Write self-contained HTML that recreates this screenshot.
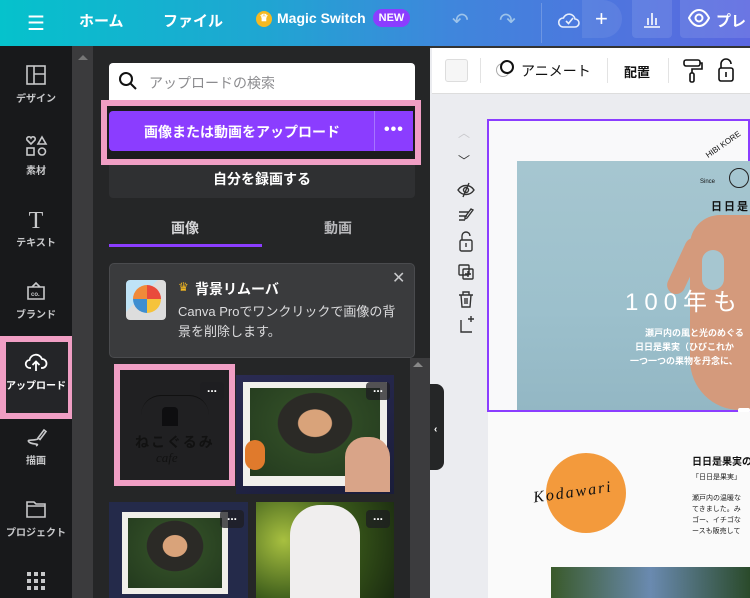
<!DOCTYPE html>
<html style="overflow:hidden;width:750px;height:598px"><head><meta charset="utf-8"><style>
*{margin:0;padding:0;box-sizing:border-box}
body{width:750px;height:598px;overflow:hidden;position:relative;font-family:"Liberation Sans","Noto Sans CJK JP",sans-serif;background:#ebecf0}
.a{position:absolute;white-space:nowrap}
.top{left:0;top:0;width:750px;height:46px;background:linear-gradient(90deg,#05c2cc 0%,#1fa6d2 35%,#3f86dc 60%,#5b67e0 100%);color:#fff;font-weight:bold;font-size:15px}
.side{left:0;top:46px;width:72px;height:552px;background:#18191b;overflow:hidden}
.si{position:absolute;left:0;width:72px;text-align:center;color:#c7c8ca;font-size:10px;font-weight:bold}
.si svg{display:block;margin:0 auto 4px}
.strip{left:72px;top:46px;width:21px;height:552px;background:#3b3b3d}
.panel{left:93px;top:46px;width:337px;height:552px;background:#252627}
.pink{border:6px solid #f09ec4}
.dots{position:absolute;width:24px;height:18px;background:rgba(30,30,34,.75);border-radius:4px;color:#fff;font-size:12px;text-align:center;line-height:12px;font-weight:bold}
</style></head><body>
<div class="a top">
 <div class="a" style="left:27px;top:11px;font-size:20px;font-weight:normal">☰</div>
 <div class="a" style="left:79px;top:10px">ホーム</div>
 <div class="a" style="left:163px;top:10px">ファイル</div>
 <div class="a" style="left:256px;top:11px;width:16px;height:16px;border-radius:8px;background:#f5b921;font-size:10px;text-align:center;line-height:16px;color:#fff">♛</div>
 <div class="a" style="left:277px;top:10px;font-size:14px">Magic Switch</div>
 <div class="a" style="left:373px;top:9px;width:37px;height:18px;border-radius:9px;background:#8b3dff;font-size:11px;text-align:center;line-height:18px">NEW</div>
 <div class="a" style="left:452px;top:8px;font-size:20px;color:#9cc3ea;font-weight:normal">↶</div>
 <div class="a" style="left:499px;top:8px;font-size:20px;color:#9cc3ea;font-weight:normal">↷</div>
 <div class="a" style="left:541px;top:3px;width:1px;height:40px;background:rgba(255,255,255,.2)"></div>
 <svg class="a" style="left:557px;top:8px" width="24" height="24" viewBox="0 0 24 24" fill="none" stroke="#e6eefc" stroke-width="1.6"><path d="M6 19h12a4 4 0 0 0 0-8 6 6 0 0 0-11.5-1A4.5 4.5 0 0 0 6 19z"/><path d="M9 13l2.5 2.5L16 10"/></svg>
 <div class="a" style="left:582px;top:0;width:40px;height:38px;background:rgba(255,255,255,.08);border-radius:0 20px 20px 0"></div>
 <div class="a" style="left:595px;top:6px;font-size:22px;font-weight:normal">+</div>
 <div class="a" style="left:632px;top:0;width:40px;height:38px;background:rgba(255,255,255,.1);border-radius:0 0 4px 4px"></div>
 <svg class="a" style="left:641px;top:8px" width="22" height="22" viewBox="0 0 22 22" fill="none" stroke="#fff" stroke-width="1.6"><path d="M3 19h16M7 17V10M11 17V5M15 17V10"/></svg>
 <div class="a" style="left:680px;top:0;width:80px;height:38px;background:rgba(255,255,255,.1);border-radius:0 0 4px 4px"></div>
 <svg class="a" style="left:688px;top:9px" width="22" height="18" viewBox="0 0 22 18" fill="none" stroke="#fff" stroke-width="2"><path d="M1 9C4 3 8 1 11 1s7 2 10 8c-3 6-7 8-10 8S4 15 1 9z"/><circle cx="11" cy="9" r="3.5"/></svg>
 <div class="a" style="left:716px;top:10px">プレ</div>
</div>
<div class="a" style="left:0;top:46px;width:750px;height:2px;background:#333"></div>

<div class="a side">
 <div class="si" style="top:18px"><svg width="22" height="22" viewBox="0 0 22 22" fill="none" stroke="#c7c8ca" stroke-width="1.6"><rect x="2" y="2" width="18" height="18"/><path d="M9 2v18M9 10h11"/></svg>デザイン</div>
 <div class="si" style="top:88px"><svg width="24" height="24" viewBox="0 0 24 24" fill="none" stroke="#c7c8ca" stroke-width="1.6"><path d="M7 10L3 6a2 2 0 0 1 4-2 2 2 0 0 1 4 2z"/><path d="M18 3l4 7h-8z"/><rect x="3" y="14" width="7" height="7"/><circle cx="18" cy="17.5" r="3.5"/></svg>素材</div>
 <div class="si" style="top:162px"><div style="font-family:'Liberation Serif',serif;font-size:24px;font-weight:normal;height:26px;color:#c7c8ca">T</div>テキスト</div>
 <div class="si" style="top:232px"><svg width="24" height="24" viewBox="0 0 24 24" fill="none" stroke="#c7c8ca" stroke-width="1.6"><path d="M4 9h16v12H4zM8 9l4-4 4 4"/><text x="7" y="18" font-size="6" fill="#c7c8ca" stroke="none">co.</text></svg>ブランド</div>
 <div class="a pink" style="left:0;top:290px;width:74px;height:83px;background:#242528"></div>
 <div class="si" style="top:305px;color:#fff"><svg width="24" height="22" viewBox="0 0 24 22" fill="none" stroke="#fff" stroke-width="1.8"><path d="M7 17H6a4 4 0 0 1-.5-8A6.5 6.5 0 0 1 18 8a4.5 4.5 0 0 1 0 9h-1"/><path d="M12 20v-9M8.5 14L12 10.5 15.5 14"/></svg>アップロード</div>
 <div class="si" style="top:380px"><svg width="24" height="22" viewBox="0 0 24 22" fill="none" stroke="#c7c8ca" stroke-width="1.6"><path d="M14 12l6-8 2 1.5-6 8zM14 13c-5 2-12 0-9 3s12 1 7 4"/></svg>描画</div>
 <div class="si" style="top:452px"><svg width="22" height="22" viewBox="0 0 22 22" fill="none" stroke="#c7c8ca" stroke-width="1.6"><path d="M2 4h7l2 2h9v13H2z"/><path d="M2 8h18"/></svg>プロジェクト</div>
 <div class="si" style="top:524px"><svg width="22" height="22" viewBox="0 0 22 22" fill="#c7c8ca"><rect x="2" y="2" width="4" height="4"/><rect x="9" y="2" width="4" height="4"/><rect x="16" y="2" width="4" height="4"/><rect x="2" y="9" width="4" height="4"/><rect x="9" y="9" width="4" height="4"/><rect x="16" y="9" width="4" height="4"/><rect x="2" y="16" width="4" height="4"/><rect x="9" y="16" width="4" height="4"/><rect x="16" y="16" width="4" height="4"/></svg>アプリ</div>
</div>
<div class="a strip"></div>
<div class="a" style="left:78px;top:55px;width:0;height:0;border-left:5px solid transparent;border-right:5px solid transparent;border-bottom:5px solid #777"></div>

<div class="a panel"></div>
<div class="a" style="left:109px;top:63px;width:306px;height:38px;background:#fff;border-radius:4px 4px 0 0"></div>
<svg class="a" style="left:118px;top:71px" width="20" height="20" viewBox="0 0 20 20" fill="none" stroke="#111" stroke-width="2"><circle cx="8" cy="8" r="6"/><path d="M12.5 12.5L18 18"/></svg>
<div class="a" style="left:149px;top:73px;font-size:14px;color:#8c8c8f">アップロードの検索</div>
<div class="a" style="left:109px;top:150px;width:306px;height:48px;background:#2f3032;border-radius:0 0 4px 4px"></div>
<div class="a" style="left:213px;top:169px;color:#fff;font-weight:bold;font-size:14px">自分を録画する</div>
<div class="a pink" style="left:101px;top:100px;width:320px;height:65px;background:#1c1c1e"></div>
<div class="a" style="left:109px;top:111px;width:304px;height:40px;background:#8b3dff;border-radius:4px 0 0 4px"></div>
<div class="a" style="left:374px;top:111px;width:1px;height:40px;background:#a675ff"></div>
<div class="a" style="left:144px;top:122px;color:#fff;font-weight:bold;font-size:14px">画像または動画をアップロード</div>
<div class="a" style="left:384px;top:121px;color:#fff;font-weight:bold;font-size:16px;letter-spacing:1px">•••</div>
<div class="a" style="left:171px;top:218px;color:#d6d6d8;font-weight:bold;font-size:14px">画像</div>
<div class="a" style="left:324px;top:218px;color:#b8b8bb;font-weight:bold;font-size:14px">動画</div>
<div class="a" style="left:109px;top:244px;width:153px;height:3px;background:#8b3dff"></div>
<div class="a" style="left:109px;top:263px;width:306px;height:95px;background:#3a3b3d;border:1px solid #4a4b4e;border-radius:5px"></div>
<div class="a" style="left:126px;top:280px;width:40px;height:40px;border-radius:4px;background:linear-gradient(135deg,#bfe3f6 40%,#ddd 40%)"></div>
<div class="a" style="left:133px;top:285px;width:28px;height:28px;border-radius:14px;background:conic-gradient(#e94b3c 0 25%,#f5c33b 0 50%,#3e8ed0 0 75%,#f08a3a 0)"></div>
<div class="a" style="left:178px;top:280px;color:#f5b921;font-size:12px">♛</div>
<div class="a" style="left:195px;top:279px;color:#fff;font-weight:bold;font-size:14px">背景リムーバ</div>
<div class="a" style="left:178px;top:302px;color:#dcdcde;font-size:13px;line-height:20px;width:225px;white-space:normal">Canva Proでワンクリックで画像の背景を削除します。</div>
<div class="a" style="left:392px;top:268px;color:#c7c8ca;font-size:16px">✕</div>
<div class="a" style="left:410px;top:358px;width:20px;height:240px;background:#3c3c3e"></div>
<div class="a" style="left:413px;top:362px;width:0;height:0;border-left:5px solid transparent;border-right:5px solid transparent;border-bottom:5px solid #888"></div>

<div class="a pink" style="left:114px;top:364px;width:121px;height:122px;background:#202022"></div>
<div class="a" style="left:141px;top:395px;width:68px;height:20px;border-top:1px solid #111;border-radius:40px 40px 0 0"></div>
<div class="a" style="left:162px;top:407px;width:16px;height:19px;background:#0e0e10;border-radius:4px 4px 0 0"></div>
<div class="a" style="left:135px;top:432px;color:#111;font-size:14px;letter-spacing:2px;font-weight:bold">ねこぐるみ</div>
<div class="a" style="left:156px;top:450px;color:#111;font-size:13px;font-style:italic;font-family:'Liberation Serif',serif">cafe</div>
<div class="dots" style="left:200px;top:382px">...</div>
<div class="a" style="left:236px;top:375px;width:158px;height:119px;background:linear-gradient(160deg,#2a2b52,#1a1d3a)"></div>
<div class="a" style="left:243px;top:382px;width:144px;height:104px;background:#f1f0ec"></div>
<div class="a" style="left:250px;top:388px;width:130px;height:88px;background:radial-gradient(ellipse at 50% 40%,#d9a37a 0 18%,#2b2a26 19% 40%,#2f4a25 41%,#233a1e)"></div>
<div class="a" style="left:245px;top:440px;width:20px;height:30px;background:#e07a2c;border-radius:10px"></div>
<div class="a" style="left:345px;top:437px;width:45px;height:55px;background:#d9a488;border-radius:20px 20px 0 0"></div>
<div class="dots" style="left:366px;top:382px">...</div>
<div class="a" style="left:109px;top:502px;width:139px;height:96px;background:#242a4a"></div>
<div class="a" style="left:122px;top:512px;width:106px;height:82px;background:#f0efe9"></div>
<div class="a" style="left:128px;top:518px;width:94px;height:70px;background:radial-gradient(ellipse at 50% 40%,#d9a37a 0 18%,#2b2a26 19% 42%,#2f4a25 43%,#233a1e)"></div>
<div class="dots" style="left:220px;top:510px">...</div>
<div class="a" style="left:256px;top:502px;width:138px;height:96px;background:radial-gradient(circle at 20% 40%,#a8c040,#3a5a1a 50%,#1a2a10)"></div>
<div class="a" style="left:290px;top:505px;width:70px;height:93px;background:#f0eeee;border-radius:30px 30px 0 0"></div>
<div class="dots" style="left:366px;top:510px">...</div>

<!-- canvas -->
<div class="a" style="left:432px;top:48px;width:318px;height:46px;background:#fff;border-bottom:1px solid #ddd"></div>
<div class="a" style="left:445px;top:59px;width:23px;height:23px;background:#f6f6f6;border:1px solid #ddd;border-radius:3px"></div>
<div class="a" style="left:480px;top:58px;width:1px;height:25px;background:#e3e3e3"></div>
<div class="a" style="left:496px;top:63px;width:14px;height:14px;border:1.5px solid #aaa;border-radius:7px"></div>
<div class="a" style="left:500px;top:60px;width:14px;height:14px;border:2px solid #111;border-radius:7px;background:#fff"></div>
<div class="a" style="left:521px;top:61px;font-size:14px;color:#111">アニメート</div>
<div class="a" style="left:607px;top:58px;width:1px;height:25px;background:#e3e3e3"></div>
<div class="a" style="left:624px;top:62px;font-size:13px;color:#111;font-weight:bold">配置</div>
<div class="a" style="left:668px;top:58px;width:1px;height:25px;background:#e3e3e3"></div>
<svg class="a" style="left:682px;top:58px" width="22" height="26" viewBox="0 0 22 26" fill="none" stroke="#111" stroke-width="1.6"><rect x="2" y="2" width="16" height="6" rx="2"/><path d="M18 5h2v6H10v4"/><rect x="8" y="15" width="4" height="9" rx="1.5"/></svg>
<svg class="a" style="left:717px;top:58px" width="18" height="26" viewBox="0 0 18 26" fill="none" stroke="#111" stroke-width="1.6"><path d="M4 10V6a5 5 0 0 1 10 0"/><rect x="2" y="10" width="14" height="13" rx="2"/><path d="M9 14v5"/></svg>

<div class="a" style="left:430px;top:384px;width:14px;height:86px;background:#252627;border-radius:0 8px 8px 0"></div>
<div class="a" style="left:434px;top:424px;color:#fff;font-size:10px;font-weight:bold">‹</div>

<div class="a" style="left:458px;top:124px;color:#c8c8cc;font-size:12px">︿</div>
<div class="a" style="left:458px;top:152px;color:#333;font-size:12px">﹀</div>
<svg class="a" style="left:456px;top:180px" width="20" height="180" viewBox="0 0 20 180" fill="none" stroke="#333" stroke-width="1.4">
<path d="M2 10c4-6 12-6 16 0-4 6-12 6-16 0z"/><circle cx="10" cy="10" r="2.5"/><path d="M13 3L7 17"/>
<path d="M3 32h10M3 36h8M3 40h6M17 30l-6 8-2 1 0-2 6-8z"/>
<path d="M6 60v-4a4 4 0 0 1 8 0"/><rect x="4" y="60" width="12" height="11" rx="1.5"/><path d="M10 63v4"/>
<rect x="3" y="85" width="10" height="10" rx="1"/><rect x="7" y="89" width="10" height="10" rx="1"/><path d="M12 91v6M9 94h6"/>
<path d="M3 115h14M7 115v-3h6v3M5 115l1 12h8l1-12M9 118v6M11 118v6"/>
<path d="M5 140v12h11M12 139h6M15 136v6"/>
</svg>

<div class="a" style="left:487px;top:119px;width:263px;height:293px;border:2.5px solid #8b3dff;background:#f9f9fa"></div>
<div class="a" style="left:517px;top:161px;width:233px;height:249px;background:linear-gradient(180deg,#a6c6d0,#9cc0cc 60%,#93b7c4)"></div>
<div class="a" style="left:676px;top:236px;width:18px;height:60px;background:#d49a7c;border-radius:9px;transform:rotate(25deg)"></div>
<div class="a" style="left:690px;top:215px;width:60px;height:195px;background:#d49a7c;border-radius:30px 0 0 50px"></div>
<div class="a" style="left:702px;top:250px;width:22px;height:40px;background:#a6c6d0;border-radius:11px"></div>
<div class="a" style="left:703px;top:140px;font-size:8px;color:#111;transform:rotate(-35deg)">HIBI KORE</div>
<div class="a" style="left:700px;top:179px;font-size:6px;color:#111">Since</div>
<div class="a" style="left:729px;top:168px;width:20px;height:20px;border:1.5px solid #222;border-radius:10px"></div>
<div class="a" style="left:711px;top:198px;font-size:11px;font-weight:bold;color:#111;letter-spacing:2px">日日是</div>
<div class="a" style="left:625px;top:282px;font-size:24px;color:#fff;letter-spacing:6px">100年も</div>
<div class="a" style="left:645px;top:326px;font-size:9px;color:#fff;font-weight:bold;line-height:14px;text-align:left">瀬戸内の風と光のめぐる<br><span style="margin-left:-10px">日日是果実（ひびこれか</span><br><span style="margin-left:-15px">一つ一つの果物を丹念に、</span></div>
<div class="a" style="left:738px;top:408px;width:12px;height:5px;background:#fff;border-radius:2px"></div>

<div class="a" style="left:488px;top:412px;width:262px;height:186px;background:#fafafa"></div>
<div class="a" style="left:546px;top:453px;width:80px;height:80px;border-radius:40px;background:#f39a3c"></div>
<div class="a" style="left:533px;top:484px;font-family:'Liberation Serif',serif;font-style:italic;font-size:16px;color:#111;transform:rotate(-8deg);letter-spacing:2px">Kodawari</div>
<div class="a" style="left:692px;top:453px;font-size:10px;font-weight:bold;color:#111">日日是果実の</div>
<div class="a" style="left:692px;top:472px;font-size:7px;color:#222">「日日是果実」</div>
<div class="a" style="left:692px;top:493px;font-size:7px;color:#222;line-height:11px">瀬戸内の温暖な<br>てきました。み<br>ゴー、イチゴな<br>ースも販売して</div>
<div class="a" style="left:551px;top:567px;width:199px;height:31px;background:linear-gradient(90deg,#3a5a2a,#6a8ab0 50%,#2a4a2a)"></div>
</body></html>
